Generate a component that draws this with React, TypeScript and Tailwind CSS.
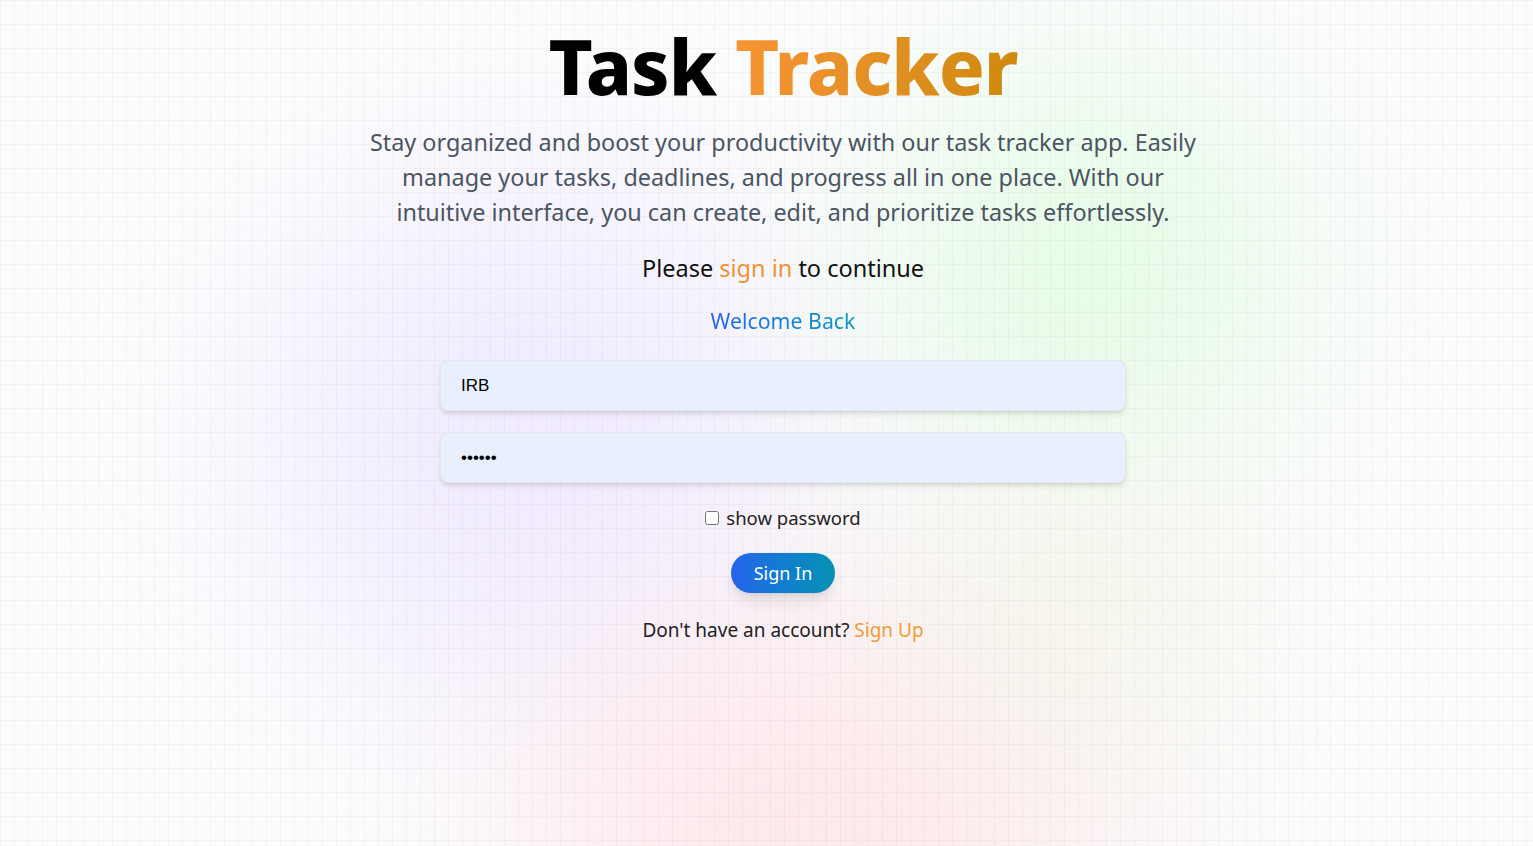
import React, { useState } from "react";

export default function App() {
  const [show, setShow] = useState(false);
  const [user, setUser] = useState("IRB");
  const [pass, setPass] = useState("secret");

  return (
    <div className="relative min-h-screen w-full overflow-hidden bg-[#fcfcfd] font-['Noto_Sans',sans-serif]">
      {/* background blobs + grid */}
      <div className="pointer-events-none absolute inset-0">
        <div className="absolute left-[270px] top-[180px] h-[520px] w-[520px] rounded-full bg-[#ece4ff] opacity-70 blur-[110px]" />
        <div className="absolute left-[880px] top-[60px] h-[420px] w-[420px] rounded-full bg-[#dcfbdc] opacity-70 blur-[110px]" />
        <div className="absolute left-[540px] top-[620px] h-[420px] w-[560px] rounded-full bg-[#ffe0e4] opacity-70 blur-[110px]" />
        <div className="absolute left-[900px] top-[480px] h-[300px] w-[360px] rounded-full bg-[#f3f3e6] opacity-70 blur-[100px]" />
        <div className="absolute inset-0 bg-[linear-gradient(to_right,#80808010_1px,transparent_1px),linear-gradient(to_bottom,#80808010_1px,transparent_1px)] bg-[size:14px_24px]" />
      </div>

      <main className="relative flex flex-col items-center pl-[33px] pt-[20px]">
        <h1 className="text-[76px] font-extrabold leading-[92px] tracking-[-1px] text-black">
          Task{" "}
          <span className="bg-gradient-to-r from-[#f79433] to-[#cf8a0c] bg-clip-text text-transparent">
            Tracker
          </span>
        </h1>

        <p className="mt-[13px] max-w-[840px] text-center text-[23.4px] leading-[35px] text-[#4b5563]">
          Stay organized and boost your productivity with our task tracker app. Easily manage your
          tasks, deadlines, and progress all in one place. With our intuitive interface, you can
          create, edit, and prioritize tasks effortlessly.
        </p>

        <p className="mt-[20px] text-[23.5px] leading-[36px] text-[#111]">
          Please <span className="text-[#f0913a]">sign in</span> to continue
        </p>

        <h2 className="mt-[19px] bg-gradient-to-r from-[#2563eb] to-[#0e96bf] bg-clip-text text-[21.3px] leading-[32px] text-transparent">
          Welcome Back
        </h2>

        <form
          className="mt-[23px] flex w-[686px] flex-col items-center"
          onSubmit={(e) => e.preventDefault()}
        >
          <input
            value={user}
            onChange={(e) => setUser(e.target.value)}
            className="h-[51px] w-full rounded-lg border border-[#e2e6ee] bg-[#e8f0fe] px-[20px] font-['Liberation_Sans',sans-serif] text-[17px] text-black shadow-md outline-none"
          />
          <input
            type={show ? "text" : "password"}
            value={pass}
            onChange={(e) => setPass(e.target.value)}
            className="mt-[21px] h-[51px] w-full rounded-lg border border-[#e2e6ee] bg-[#e8f0fe] px-[20px] font-['Liberation_Sans',sans-serif] text-[17px] text-black shadow-md outline-none"
          />

          <label className="mt-[23px] flex items-center gap-[7px] text-[18.5px] leading-[24px] text-[#222]">
            <input
              type="checkbox"
              checked={show}
              onChange={(e) => setShow(e.target.checked)}
              className="h-[14px] w-[14px]"
            />
            show password
          </label>

          <button
            type="submit"
            className="mt-[23px] h-[40px] w-[104px] rounded-full bg-gradient-to-r from-[#2563eb] to-[#0891b2] text-[18px] text-white shadow-lg"
          >
            Sign In
          </button>

          <p className="mt-[23px] text-[19px] leading-[28px] text-[#222]">
            Don't have an account? <span className="text-[#f29a3a]">Sign Up</span>
          </p>
        </form>
      </main>
    </div>
  );
}
